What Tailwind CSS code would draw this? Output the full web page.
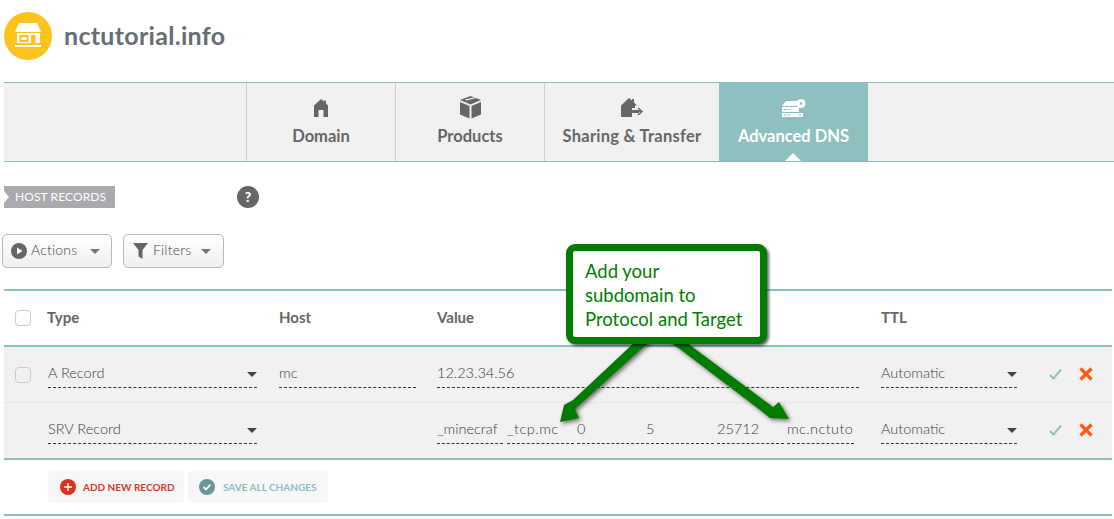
<!DOCTYPE html>
<html lang="en">
<head>
  <meta charset="UTF-8" />
  <title>nctutorial.info - Advanced DNS</title>
  <script src="https://cdn.jsdelivr.net/npm/@tailwindcss/browser@4"></script>
</head>
<body class="relative bg-white h-[519px] w-[1114px] overflow-hidden font-['Lato','Open_Sans',sans-serif] text-[#666]">

  <!-- Header -->
  <div class="flex items-center h-[82px] pl-1 pb-[10px] gap-3">
    <svg class="w-12 h-12" viewBox="0 0 48 48">
      <circle cx="24" cy="24" r="24" fill="#fdc31c"/>
      <path d="M15 11h18l4 9H11z" fill="#fff"/>
      <path d="M13 21h23v10H13z" fill="#fff"/>
      <path d="M15.500 23h9v7h-9zM17.500 25v3h5v-3z" fill="#fdc31c" fill-rule="evenodd"/>
      <path d="M27 23h4.500v8H27z" fill="#fdc31c"/>
      <path d="M11 33h26v2H11z" fill="#fff"/>
    </svg>
    <h1 class="text-[25px] font-bold tracking-[0.3px] leading-8 mb-[3px] text-[#666e75]">nctutorial.info</h1>
  </div>

  <!-- Tabs -->
  <div class="flex ml-1 h-[80px] bg-[#f1f1f1] border-y border-[#8bc0be]">
    <div class="w-[242px]"></div>
    <div class="w-[149px] border-l border-[#d0d0d0] flex flex-col items-center pt-[15px]">
      <svg class="w-5 h-5" viewBox="0 0 20 20" fill="#666"><path d="M10 1l3 2.500V2.500h2v3l2 2V19h-4.500v-7h-5v7H3V7.500z"/></svg>
      <span class="mt-2 text-[16.500px] font-bold leading-5">Domain</span>
    </div>
    <div class="w-[149px] border-l border-[#d0d0d0] flex flex-col items-center pt-[13px]">
      <svg class="w-[23px] h-[23px]" viewBox="0 0 23 23" fill="#666"><path d="M11.500 0l10.500 4-10.500 4.500L1 4z"/><path d="M1 6l9.500 4v12.500L1 18.500z"/><path d="M22 6l-9.500 4v12.500l9.500-4z"/><path d="M6 3.500l10.500-2.500 1.500.8L7.500 4.500z" fill="#f1f1f1"/></svg>
      <span class="mt-[7px] text-[16.500px] font-bold leading-5">Products</span>
    </div>
    <div class="w-[175px] border-l border-[#d0d0d0] flex flex-col items-center pt-[15px]">
      <svg class="w-6 h-5" viewBox="0 0 24 20" fill="#666"><path d="M8 0l3 2.500V1h2v3.500l3 3H14V10H2v9H0V7.500z" transform="translate(1 0)"/><path d="M3 8h9v4h7v3H12v4H3z"/><path d="M13 13h8M18 10l4 3.500-4 3.500" fill="none" stroke="#666" stroke-width="1.500"/></svg>
      <span class="mt-2 text-[16.500px] tracking-[0.25px] font-bold leading-5">Sharing &amp; Transfer</span>
    </div>
    <div class="relative w-[149px] bg-[#8dc0be] text-white flex flex-col items-center pt-[15px]">
      <svg class="w-[24px] h-5" viewBox="0 0 24 20" fill="#fff"><path d="M4 3h12l2 5H0z"/><path d="M0 9h17v5H0zM0 15h21v4H0z"/><circle cx="19" cy="5.500" r="4.500"/><circle cx="19" cy="5.500" r="1.300" fill="#8dc0be"/><path d="M2 11h3v1H2zM6 11h2v1H6zM2 16.500h3v1H2zM6 16.500h2v1H6zM17 16.500h2v1h-2z" fill="#8dc0be"/></svg>
      <span class="mt-2 text-[16.500px] font-bold leading-5">Advanced DNS</span>
      <span class="absolute bottom-0 left-[66px] w-0 h-0 border-x-8 border-x-transparent border-b-8 border-b-white"></span>
    </div>
  </div>

  <!-- Section title -->
  <div class="flex items-center ml-1 mt-[24px] h-[22px]">
    <div class="relative w-[111px] h-[22px] bg-[#a9abae] pl-[11px] text-[12px] tracking-[0.1px] leading-[22px] text-white">
      <span class="absolute left-0 top-[5px] w-0 h-0 border-y-[6px] border-y-transparent border-l-[5px] border-l-white"></span>
      HOST RECORDS
    </div>
    <div class="ml-[122px] w-[22px] h-[22px] rounded-full bg-[#666] text-white text-[14px] font-black leading-[22px] text-center">?</div>
  </div>

  <!-- Toolbar -->
  <div class="flex ml-[2px] mt-[26px] gap-[11px] text-[14px] font-light text-[#444]">
    <div class="flex items-center w-[110px] h-[34px] pl-2 gap-1 rounded-[5px] border border-[#b9b9b9] bg-gradient-to-b from-white to-[#efefef]">
      <svg class="w-4 h-4" viewBox="0 0 16 16"><circle cx="8" cy="8" r="8" fill="#666"/><path d="M6 4.500l5.500 3.500L6 11.500z" fill="#fff"/></svg>
      <span class="mb-[3px] tracking-[0.2px]">Actions</span>
      <span class="ml-[9px] w-0 h-0 border-x-[5px] border-x-transparent border-t-[5px] border-t-[#777]"></span>
    </div>
    <div class="flex items-center w-[101px] h-[34px] pl-[9px] gap-[5px] rounded-[5px] border border-[#b9b9b9] bg-gradient-to-b from-white to-[#efefef]">
      <svg class="w-[15px] h-[18px]" viewBox="0 0 15 18" fill="#666"><path d="M0 1h15L9.500 8v9l-4-2.500V8z"/></svg>
      <span class="mb-[3px] tracking-[0.2px]">Filters</span>
      <span class="ml-[5px] w-0 h-0 border-x-[5px] border-x-transparent border-t-[5px] border-t-[#777]"></span>
    </div>
  </div>

  <!-- Table -->
  <div class="ml-1 mt-[21px] mr-[2px] text-[14.500px]">
    <div class="grid grid-cols-[44px_231px_158px_444px_168px_30px_1fr] items-center h-[58px] pb-[2px] border-y-2 border-[#8bc0be] font-bold">
      <span class="ml-[11px] w-4 h-4 rounded-[4px] border border-[#ccc] mt-[2px]"></span>
      <span class="text-[15px] -ml-px">Type</span>
      <span class="text-[15px]">Host</span>
      <span class="text-[15px]">Value</span>
      <span class="text-[15px]">TTL</span>
    </div>

    <div class="bg-[#f1f1f1] text-[#353d47] font-light">
      <div class="grid grid-cols-[44px_231px_158px_444px_168px_30px_1fr] items-center h-14 border-b border-[#e6e6e6]">
        <span class="ml-[11px] w-4 h-4 rounded-[4px] border border-[#ccc]"></span>
        <div class="relative w-[209px] h-[26px] border-b border-dashed border-[#333]">A Record<span class="absolute right-0 top-[10px] w-0 h-0 border-x-[5px] border-x-transparent border-t-[5px] border-t-[#444]"></span></div>
        <div class="w-[137px] h-[26px] border-b border-dashed border-[#333]">mc</div>
        <div class="w-[422px] h-[26px] border-b border-dashed border-[#333]">12.23.34.56</div>
        <div class="relative w-[136px] h-[26px] border-b border-dashed border-[#333]">Automatic<span class="absolute right-0 top-[10px] w-0 h-0 border-x-[5px] border-x-transparent border-t-[5px] border-t-[#444]"></span></div>
        <svg class="w-[13px] h-3 mb-[2px]" viewBox="0 0 13 12"><path d="M1 7l3.500 3.500L12 1.500" fill="none" stroke="#8dc0be" stroke-width="2"/></svg>
        <svg class="w-[14px] h-[14px] mb-[2px]" viewBox="0 0 14 14"><path d="M1.500 1.500l11 11M12.500 1.500l-11 11" fill="none" stroke="#ff5a10" stroke-width="3.200"/></svg>
      </div>
      <div class="grid grid-cols-[44px_231px_158px_444px_168px_30px_1fr] items-center h-[55px]">
        <span></span>
        <div class="relative w-[209px] h-[26px] border-b border-dashed border-[#333]">SRV Record<span class="absolute right-0 top-[10px] w-0 h-0 border-x-[5px] border-x-transparent border-t-[5px] border-t-[#444]"></span></div>
        <span></span>
        <div class="flex">
          <div class="w-[66px] h-[26px] mr-1 border-b border-dashed border-[#333] overflow-hidden">_minecraf</div>
          <div class="w-[67px] h-[26px] mr-[3px] border-b border-dashed border-[#333] overflow-hidden tracking-[0.5px]">_tcp.mc</div>
          <div class="w-[67px] h-[26px] mr-[2px] border-b border-dashed border-[#333]">0</div>
          <div class="w-[68px] h-[26px] mr-[3px] border-b border-dashed border-[#333]">5</div>
          <div class="w-[67px] h-[26px] mr-[3px] border-b border-dashed border-[#333]">25712</div>
          <div class="w-[67px] h-[26px] border-b border-dashed border-[#333] overflow-hidden tracking-[0.4px]">mc.nctuto</div>
        </div>
        <div class="relative w-[136px] h-[26px] border-b border-dashed border-[#333]">Automatic<span class="absolute right-0 top-[10px] w-0 h-0 border-x-[5px] border-x-transparent border-t-[5px] border-t-[#444]"></span></div>
        <svg class="w-[13px] h-3 mb-[2px]" viewBox="0 0 13 12"><path d="M1 7l3.500 3.500L12 1.500" fill="none" stroke="#8dc0be" stroke-width="2"/></svg>
        <svg class="w-[14px] h-[14px] mb-[2px]" viewBox="0 0 14 14"><path d="M1.500 1.500l11 11M12.500 1.500l-11 11" fill="none" stroke="#ff5a10" stroke-width="3.200"/></svg>
      </div>
    </div>

    <!-- Actions -->
    <div class="flex gap-1 h-[58px] pl-11 pt-[11px] border-y-2 border-[#8bc0be] text-[10px] font-bold">
      <div class="flex items-center gap-[7px] w-[136px] h-8 pl-3 rounded-[4px] bg-[#f7f7f7] text-[#e3342b]">
        <svg class="w-4 h-4" viewBox="0 0 16 16"><circle cx="8" cy="8" r="8" fill="#e0301e"/><path d="M8 4v8M4 8h8" stroke="#fff" stroke-width="1.500"/></svg>
        ADD NEW RECORD
      </div>
      <div class="flex items-center gap-[8px] w-[140px] h-8 pl-[11px] rounded-[4px] bg-[#f7f7f7] text-[#8dc0be]">
        <svg class="w-4 h-4" viewBox="0 0 16 16"><circle cx="8" cy="8" r="8" fill="#6a9597"/><path d="M4.500 8l2.500 2.500 4.500-5" fill="none" stroke="#fff" stroke-width="1.800"/></svg>
        SAVE ALL CHANGES
      </div>
    </div>
  </div>

  <!-- Annotation laid over the table -->
  <svg class="absolute left-0 top-0 w-[1114px] h-[519px] pointer-events-none drop-shadow-[2px_2px_2px_rgba(0,0,0,0.55)]" viewBox="0 0 1114 519">
    <path d="M637 340L573 400 564 405 560 422 579 418 575 409 651 340z" fill="#007c00"/>
    <path d="M668 340L764 413 770 418 789 419 779 402 773 407 683 340z" fill="#007c00"/>
  </svg>
  <div class="absolute left-[566px] top-[244px] w-[201px] h-[100px] rounded-[9px] border-[7px] border-[#007c00] bg-white shadow-[2px_2px_3px_rgba(0,0,0,0.6)] pl-[12px] pt-2 text-[18.500px] leading-6 text-[#008000]">
    Add your<br>subdomain to<br>Protocol and Target
  </div>
</body>
</html>
